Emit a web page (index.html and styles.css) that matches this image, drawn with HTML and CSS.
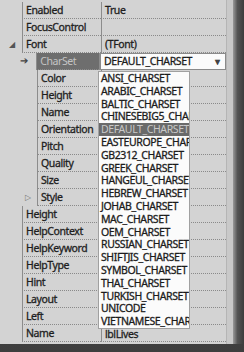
FILE: index.html
```html
<!DOCTYPE html>
<html>
<head>
    <title>Object Inspector</title>
    <link rel="stylesheet" href="styles.css">
</head>
<body>
    <div class="desk">
        <div class="panel">
            <div class="grid">
                <div class="row"><div class="gut"></div><div class="name">Enabled</div><div class="val">True</div></div>
                <div class="row"><div class="gut"></div><div class="name">FocusControl</div><div class="val"></div></div>
                <div class="row"><div class="gut"><span class="open">&#9698;</span></div><div class="name">Font</div><div class="val">(TFont)</div></div>
                <div class="row sub"><div class="gut"><span class="arrow">&#10132;</span></div><div class="name sel">CharSet</div>
                    <div class="val"><div class="combo"><span>DEFAULT_CHARSET</span><span class="caret">&#9662;</span></div></div></div>
                <div class="row sub"><div class="gut"></div><div class="name">Color</div><div class="val"></div></div>
                <div class="row sub"><div class="gut"></div><div class="name">Height</div><div class="val"></div></div>
                <div class="row sub"><div class="gut"></div><div class="name">Name</div><div class="val"></div></div>
                <div class="row sub"><div class="gut"></div><div class="name">Orientation</div><div class="val"></div></div>
                <div class="row sub"><div class="gut"></div><div class="name">Pitch</div><div class="val"></div></div>
                <div class="row sub"><div class="gut"></div><div class="name">Quality</div><div class="val"></div></div>
                <div class="row sub"><div class="gut"></div><div class="name">Size</div><div class="val"></div></div>
                <div class="row sub"><div class="gut"><span class="closed">&#9655;</span></div><div class="name">Style</div><div class="val"></div></div>
                <div class="row"><div class="gut"></div><div class="name">Height</div><div class="val"></div></div>
                <div class="row"><div class="gut"></div><div class="name">HelpContext</div><div class="val"></div></div>
                <div class="row"><div class="gut"></div><div class="name">HelpKeyword</div><div class="val"></div></div>
                <div class="row"><div class="gut"></div><div class="name">HelpType</div><div class="val"></div></div>
                <div class="row"><div class="gut"></div><div class="name">Hint</div><div class="val"></div></div>
                <div class="row"><div class="gut"></div><div class="name">Layout</div><div class="val"></div></div>
                <div class="row"><div class="gut"></div><div class="name">Left</div><div class="val"></div></div>
                <div class="row"><div class="gut"></div><div class="name">Name</div><div class="val last">lblLives</div></div>
            </div>
            <div class="band"></div>
        </div>
        <div class="edge"></div>
    </div>

    <ul class="drop">
        <li>ANSI_CHARSET</li>
        <li>ARABIC_CHARSET</li>
        <li>BALTIC_CHARSET</li>
        <li>CHINESEBIG5_CHARSET</li>
        <li class="hi">DEFAULT_CHARSET</li>
        <li>EASTEUROPE_CHARSET</li>
        <li>GB2312_CHARSET</li>
        <li>GREEK_CHARSET</li>
        <li>HANGEUL_CHARSET</li>
        <li>HEBREW_CHARSET</li>
        <li>JOHAB_CHARSET</li>
        <li>MAC_CHARSET</li>
        <li>OEM_CHARSET</li>
        <li>RUSSIAN_CHARSET</li>
        <li>SHIFTJIS_CHARSET</li>
        <li>SYMBOL_CHARSET</li>
        <li>THAI_CHARSET</li>
        <li>TURKISH_CHARSET</li>
        <li>UNICODE</li>
        <li>VIETNAMESE_CHARSET</li>
    </ul>
</body>
</html>
```

FILE: styles.css
```css
body {
    margin: 0;
    width: 244px;
    height: 352px;
    overflow: hidden;
    background: linear-gradient(#5a5a5a, #3e3e3e);
    font-family: 'Noto Sans', sans-serif;
    font-size: 10.5px;
    letter-spacing: -0.4px;
    color: #1e1e1e;
    position: relative;
}

.desk {
    display: flex;
    height: 344px;
}

.panel {
    display: flex;
    width: 233px;
    background-color: #d3d3d3;
}

.grid {
    width: 226px;
    padding-top: 2px;
}

.band {
    flex: 1;
    background-color: #c9c9c9;
    border-left: 1px solid #b5b5b5;
}

.edge {
    flex: 1;
    background: linear-gradient(to right, #9a9a9a, #555 40%, #3c3c3c);
}

.row {
    display: flex;
    height: 17px;
}

.gut {
    width: 22px;
    position: relative;
    color: #555;
}

.sub .gut {
    width: 37px;
}

.name {
    width: 75px;
    border-left: 1px solid #8c8c8c;
    border-bottom: 1px dotted #8a8a8a;
    padding-left: 3px;
    line-height: 16px;
    white-space: nowrap;
    overflow: hidden;
    -webkit-text-stroke: 0.3px #1e1e1e;
}

.sub .name {
    width: 60px;
}

.name.sel {
    background-color: #6e6e6e;
    color: #c4c4c4;
    -webkit-text-stroke: 0;
}

.val {
    flex: 1;
    border-left: 1px solid #8c8c8c;
    border-bottom: 1px dotted #8a8a8a;
    padding-left: 3px;
    line-height: 16px;
    white-space: nowrap;
    -webkit-text-stroke: 0.3px #1e1e1e;
}

.val.last {
    padding-top: 2px;
    line-height: 15px;
}

.open {
    position: absolute;
    left: 9px;
    top: 2px;
    font-size: 8px;
}

.arrow {
    position: absolute;
    left: 20px;
    top: 0;
    font-size: 10px;
    color: #444;
}

.closed {
    position: absolute;
    left: 25px;
    top: 2px;
    font-size: 8px;
    color: #777;
}

.combo {
    display: flex;
    justify-content: space-between;
    margin-left: -3px;
    width: 116px;
    height: 15px;
    background-color: #fbfbfb;
    border: 1px solid #8a8a8a;
    padding: 0 5px 0 3px;
    line-height: 15px;
    color: #1c1c1c;
}

.caret {
    color: #444;
    font-size: 10px;
}

.drop {
    position: absolute;
    left: 98px;
    top: 71px;
    width: 90px;
    margin: 0;
    padding: 0;
    list-style: none;
    background-color: #fbfbfb;
    border: 1px solid #a0a0a0;
    overflow: hidden;
}

.drop li {
    height: 12.8px;
    line-height: 12.8px;
    padding-left: 2px;
    white-space: nowrap;
    color: #1c1c1c;
    -webkit-text-stroke: 0.3px #1c1c1c;
}

.drop li.hi {
    background-color: #6a6a6a;
    color: #c8c8c8;
    -webkit-text-stroke: 0;
}
```
